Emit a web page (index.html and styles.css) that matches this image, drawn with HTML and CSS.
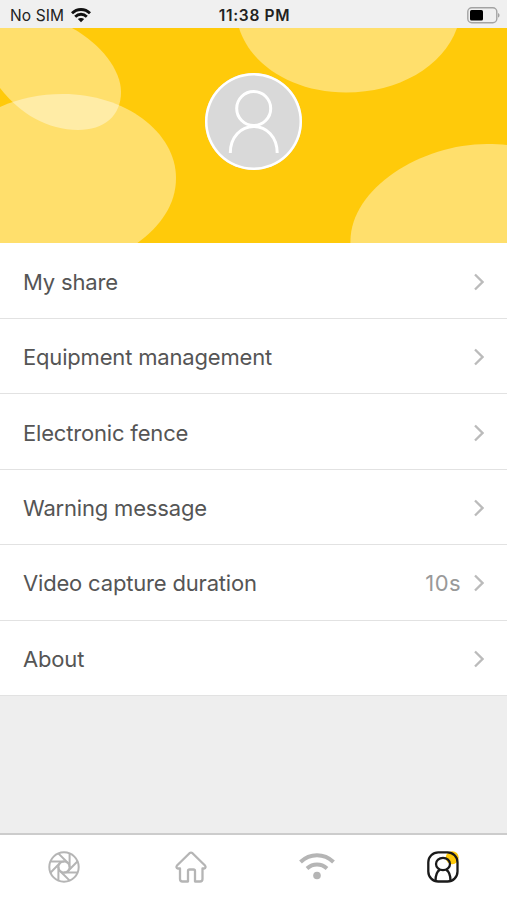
FILE: index.html
```html
<!DOCTYPE html>
<html lang="en">
<head>
    <meta charset="UTF-8">
    <meta name="viewport" content="width=device-width, initial-scale=1.0">
    <title>Profile</title>
    <link rel="stylesheet" href="styles.css">
</head>
<body>
    <div class="statusbar">
        <div class="carrier">
            <span>No SIM</span>
            <svg width="20" height="15" viewBox="0 0 20 15" fill="none" stroke="#111" stroke-width="2.8">
                <path d="M1 5.3 C6 0.2 14 0.2 19 5.3"/>
                <path d="M4.2 8.7 C7.5 5.4 12.5 5.4 15.8 8.7"/>
                <path d="M10 14.2 L6.8 11.1 C8.6 9.5 11.4 9.5 13.2 11.1 Z" fill="#111" stroke="none"/>
            </svg>
        </div>
        <div class="time">11:38 PM</div>
        <div class="battery">
            <svg width="33" height="17" viewBox="0 0 33 17">
                <rect x="0.8" y="0.8" width="29" height="15" rx="4" fill="none" stroke="#a3a3a3" stroke-width="1.4"/>
                <rect x="3" y="3" width="13" height="10.6" rx="1.6" fill="#000"/>
                <path d="M31 6 C33 6.8 33 9.8 31 10.6 Z" fill="#a3a3a3"/>
            </svg>
        </div>
    </div>

    <header class="banner">
        <svg class="bubbles" width="507" height="215" viewBox="0 28 507 215" fill="#fff" fill-opacity="0.4">
            <path d="M0 28 H72 C101 44 121 70 121 92 C121 116 104 130 78 130 C48 130 20 114 0 88 Z"/>
            <path d="M0 107 C20 98 40 94 63 94 C125 94 176 132 176 178 C176 205 160 227 136 244 H0 Z"/>
            <path d="M239 28 C251 66 294 92.5 346 92.5 C398 92.5 443 67 457 28 Z"/>
            <path d="M350.5 244 C348 190 420 144 487 144 C494 144 501 144 507 145 V244 Z"/>
        </svg>
        <div class="avatar">
            <svg width="97" height="97" viewBox="0 0 97 97" fill="none" stroke="#fff" stroke-width="3">
                <circle cx="48.7" cy="35.5" r="17"/>
                <path d="M25.3 80 C25.3 64 36 53.5 48.7 53.5 C61.5 53.5 72.2 64 72.2 80"/>
            </svg>
        </div>
    </header>

    <main class="menu">
        <a class="item">
            <span class="label">My share</span>
            <svg class="arrow" viewBox="0 0 10 18"><path d="M1 1.5 L8.5 9 L1 16.5"/></svg>
        </a>
        <a class="item">
            <span class="label">Equipment management</span>
            <svg class="arrow" viewBox="0 0 10 18"><path d="M1 1.5 L8.5 9 L1 16.5"/></svg>
        </a>
        <a class="item">
            <span class="label">Electronic fence</span>
            <svg class="arrow" viewBox="0 0 10 18"><path d="M1 1.5 L8.5 9 L1 16.5"/></svg>
        </a>
        <a class="item">
            <span class="label">Warning message</span>
            <svg class="arrow" viewBox="0 0 10 18"><path d="M1 1.5 L8.5 9 L1 16.5"/></svg>
        </a>
        <a class="item">
            <span class="label">Video capture duration</span>
            <span class="value">10s</span>
            <svg class="arrow" viewBox="0 0 10 18"><path d="M1 1.5 L8.5 9 L1 16.5"/></svg>
        </a>
        <a class="item">
            <span class="label">About</span>
            <svg class="arrow" viewBox="0 0 10 18"><path d="M1 1.5 L8.5 9 L1 16.5"/></svg>
        </a>
    </main>

    <nav class="tabbar">
        <a class="tab">
            <svg width="36" height="36" viewBox="0 0 36 36" fill="none" stroke="#b5b5b5" stroke-width="2">
                <circle cx="18" cy="18" r="14.7"/>
                <circle cx="18" cy="18" r="5.6"/>
                <path d="M18 12.4 H4.4 M22 14 L12.3 4.4 M23.6 18 V4.4 M22 22 L31.6 12.3 M18 23.6 H31.6 M14 22 L23.7 31.6 M12.4 18 V31.6 M14 14 L4.4 23.7"/>
            </svg>
        </a>
        <a class="tab">
            <svg width="36" height="36" viewBox="-1 0 36 36" fill="none" stroke="#b5b5b5" stroke-width="2.3" stroke-linejoin="round">
                <path d="M16.5 4.2 Q18 3 19.5 4.2 L32 16.5 Q33.5 19 31 19.5 H29.5 V30 Q29.5 32.5 27 32.5 H22 V22 Q22 20.5 20.5 20.5 H16.5 Q15 20.5 15 22 V32.5 H9.5 Q7 32.5 7 30 V19.5 H5 Q2.5 19 4 16.5 Z"/>
            </svg>
        </a>
        <a class="tab">
            <svg width="36" height="36" viewBox="0 0 36 36" fill="none" stroke="#b5b5b5" stroke-width="4">
                <path d="M1.5 13 C11 4 25 4 34.5 13"/>
                <path d="M8 19.5 C14 14.2 22 14.2 28 19.5"/>
                <circle cx="18" cy="26.5" r="3.8" fill="#b5b5b5" stroke="none"/>
            </svg>
        </a>
        <a class="tab">
            <svg width="36" height="36" viewBox="0 0 36 36" fill="none" stroke="#1a1a1a" stroke-width="2.3">
                <circle cx="27.2" cy="8.7" r="6.5" fill="#ffca0a" stroke="none"/>
                <rect x="3.3" y="3.3" width="29.2" height="29.2" rx="10"/>
                <ellipse cx="18" cy="15" rx="7" ry="6.2"/>
                <path d="M10.5 32 C10.5 26.5 12 22.5 14.8 20.8 M25.5 32 C25.5 26.5 24 22.5 21.2 20.8"/>
            </svg>
        </a>
    </nav>
</body>
</html>
```
FILE: styles.css
```css
* {
    box-sizing: border-box;
}
body {
    margin: 0;
    height: 900px;
    display: flex;
    flex-direction: column;
    background-color: #eee;
    font-family: Inter, "Liberation Sans", sans-serif;
    overflow: hidden;
}
svg {
    display: block;
}
.statusbar {
    height: 28px;
    display: grid;
    grid-template-columns: 1fr auto 1fr;
    align-items: center;
    padding: 2px 8px 0 10px;
    background-color: #f0f0f0;
    color: #222;
    font-size: 15.5px;
}
.carrier {
    display: flex;
    align-items: center;
    gap: 7px;
    letter-spacing: 0.1px;
}
.time {
    font-weight: 600;
    letter-spacing: 0.7px;
}
.battery {
    justify-self: end;
    margin-right: -1px;
}
.banner {
    position: relative;
    height: 215px;
    display: flex;
    justify-content: center;
    padding-top: 44.7px;
    background-color: #ffca0a;
}
/* Decorative shapes sit behind the avatar */
.bubbles {
    position: absolute;
    top: 0;
    left: 0;
}
.avatar {
    position: relative;
    width: 97px;
    height: 97px;
    border-radius: 50%;
    background-color: #d9d9d9;
    box-shadow: inset 0 0 0 2.5px #fff;
}
.menu {
    padding-top: 0.6px;
    background-color: #fff;
}
.item {
    display: flex;
    align-items: center;
    height: 75.4px;
    padding: 2px 23px 0;
    border-bottom: 1px solid #e2e2e2;
    color: #555;
    font-size: 22px;
    letter-spacing: -0.18px;
}
.label {
    flex: 1;
}
.value {
    margin-right: 13px;
    color: #999;
    letter-spacing: 0.4px;
}
.arrow {
    width: 10px;
    height: 18px;
    fill: none;
    stroke: #bbb;
    stroke-width: 2.3;
}
.tabbar {
    display: grid;
    grid-template-columns: repeat(4, 126.3px);
    justify-content: center;
    height: 67px;
    margin-top: auto;
    padding-top: 13.5px;
    border-top: 2px solid #ccc;
    background-color: #fff;
}
.tab {
    display: flex;
    justify-content: center;
}
```
